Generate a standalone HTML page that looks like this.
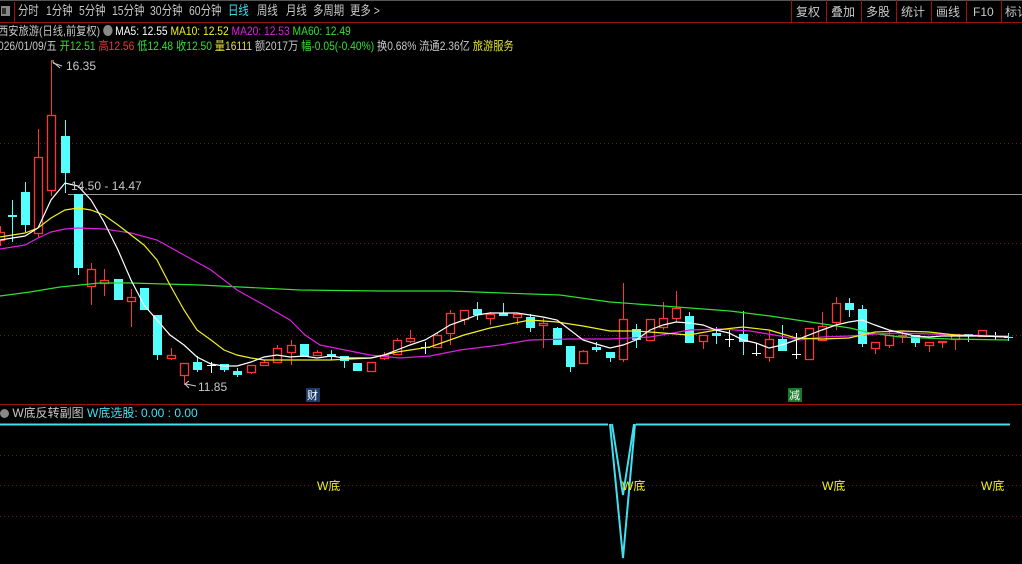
<!DOCTYPE html>
<html><head><meta charset="utf-8">
<style>
body{margin:0;background:#000;width:1022px;height:564px;overflow:hidden;font-family:"Liberation Sans","Noto Sans CJK SC",sans-serif;}
.t{position:absolute;font-size:12px;white-space:nowrap;line-height:14px}
.sx{transform:scaleX(0.855);transform-origin:0 0}
.tb{font-size:13px;transform:scaleX(0.8);transform-origin:0 0;top:4px!important}
</style></head><body>
<svg id="s" width="1022" height="564" style="position:absolute;left:0;top:0" xmlns="http://www.w3.org/2000/svg">
<rect width="1022" height="564" fill="#000"/>
<rect x="0" y="0" width="1022" height="1" fill="#555"/>
<line x1="0" y1="22.5" x2="1022" y2="22.5" stroke="#a01010"/>
<line x1="14.5" y1="2" x2="14.5" y2="22" stroke="#a01010"/>
<rect x="1" y="6" width="9" height="10" fill="#888"/><rect x="2" y="8" width="4" height="6" fill="#333"/>
<g stroke="#a01010">
<line x1="791.5" y1="0" x2="791.5" y2="22"/><line x1="826.5" y1="0" x2="826.5" y2="22"/><line x1="861.5" y1="0" x2="861.5" y2="22"/><line x1="896.5" y1="0" x2="896.5" y2="22"/><line x1="931.5" y1="0" x2="931.5" y2="22"/><line x1="966.5" y1="0" x2="966.5" y2="22"/><line x1="1001.5" y1="0" x2="1001.5" y2="22"/>
</g>
<g stroke="#6a1a1a" stroke-dasharray="1 3">
<line x1="0" y1="143.5" x2="1022" y2="143.5"/><line x1="0" y1="243.5" x2="1022" y2="243.5"/><line x1="0" y1="335.5" x2="1022" y2="335.5"/>
<line x1="0" y1="455.5" x2="1022" y2="455.5"/><line x1="0" y1="485.5" x2="1022" y2="485.5"/><line x1="0" y1="516.5" x2="1022" y2="516.5"/>
</g>
<line x1="68" y1="194.5" x2="1022" y2="194.5" stroke="#999"/>
<line x1="0" y1="404.5" x2="1022" y2="404.5" stroke="#a01010"/>
<g id="c"></g>
<g fill="none" stroke-width="1.2">
<polyline stroke="#30e030" points="0,296 30,292 60,287 80,285 100,283 130,283 200,285 300,290 380,291 450,291 530,294 560,295 610,302 650,305 690,308 730,311 770,316 810,322 850,328 870,333 900,337 950,339 1008,340"/>
<polyline stroke="#e020e0" points="0,249 25,245 38,238 51,232 65,229 78,228 104,229 131,233 157,240 184,255 211,270 237,290 264,305 290,320 305,335 320,345 345,350 370,355 400,358 430,356 460,350 500,345 530,340 570,339 610,339 650,337 690,330 720,329 750,331 780,336 800,340 822,337 849,336 875,334 900,333 930,334 960,335 1008,336"/>
<polyline stroke="#f0f020" points="0,237 25,233 38,228 51,218 65,210 78,208 91,210 104,215 118,225 131,235 144,245 157,260 170,285 184,310 197,330 211,340 224,350 237,355 251,358 264,360 290,360 330,360 371,358 397,352 430,347 464,335 490,328 530,320 557,322 583,326 610,331 636,331 663,333 689,335 716,330 743,327 769,330 796,338 822,339 849,338 875,332 902,331 929,332 955,335 982,336 1008,337"/>
<polyline stroke="#fff" points="0,240 25,236 38,228 51,200 65,183 78,186 91,200 104,222 118,250 131,280 144,305 157,320 170,335 184,345 197,357 211,364 224,366 237,366 251,362 264,357 277,355 290,357 304,356 317,358 331,356 344,358 357,358 371,358 384,355 397,350 410,345 425,340 437,333 450,325 464,320 477,315 490,313 503,313 517,313 530,315 543,317 557,320 570,330 583,340 596,344 610,348 623,345 636,340 650,330 663,325 676,322 689,323 703,325 716,330 729,333 743,340 756,343 769,348 782,345 796,340 809,335 822,330 836,325 849,322 862,320 875,325 889,330 902,333 915,336 929,337 942,336 955,336 968,336 982,336 1008,337"/>
</g>
<g stroke="#ccc" fill="none"><polyline points="60,68 53,62 53,60"/><line x1="53" y1="63" x2="62" y2="66"/><line x1="186" y1="384" x2="196" y2="386"/><polyline points="189,381 185,384 189,388"/></g>
<line x1="0" y1="424.5" x2="608" y2="424.5" stroke="#40e0f0" stroke-width="2"/>
<line x1="636" y1="424.5" x2="1010" y2="424.5" stroke="#40e0f0" stroke-width="2"/>
<g fill="none" stroke="#40e0f0" stroke-width="2">
<polyline points="610,424 623,558 635,424"/>
<polyline points="612,424 623,495 634,424"/>
</g>
<rect x="306" y="388" width="14" height="14" fill="#1c3a6a"/>
<rect x="788" y="388" width="14" height="14" fill="#1a7a2a"/>
</svg>
<script>
var d=[[0,1,232,240,226,246],[12,0,215,217,200,242],[25,0,192,225,182,232],[38,1,157,233,129,238],[51,1,115,190,60,196],[65,0,136,173,120,193],[78,0,194,268,194,275],[91,1,269,286,263,305],[104,1,280,283,269,296],[118,0,279,300,279,300],[131,1,297,301,289,327],[144,0,288,310,288,310],[157,0,315,355,315,360],[171,1,355,358,348,360],[184,1,363,375,363,385],[197,0,362,370,356,372],[211,2,365,365,362,373],[224,0,364,370,364,372],[237,0,371,375,368,377],[251,1,365,372,365,374],[264,1,362,365,360,366],[277,1,348,362,345,362],[291,1,345,352,340,365],[304,0,344,357,344,357],[317,1,352,355,350,355],[331,0,354,357,350,360],[344,0,356,361,356,368],[357,0,363,371,363,371],[371,1,362,371,362,371],[384,1,355,358,352,360],[397,1,340,354,338,354],[410,1,338,341,330,343],[425,2,347,347,342,354],[437,1,335,347,333,347],[450,1,313,333,310,345],[464,1,310,319,310,325],[477,0,309,315,302,320],[490,1,314,318,312,325],[503,0,313,316,303,316],[517,1,314,317,314,325],[530,0,317,328,314,332],[543,1,323,325,318,348],[557,0,328,345,327,345],[570,0,346,367,346,372],[583,1,351,363,350,364],[596,0,347,350,342,352],[610,0,352,358,352,362],[623,1,319,359,283,362],[636,0,329,340,324,348],[650,1,319,340,319,340],[663,1,318,327,302,330],[676,1,308,318,291,322],[689,0,316,343,312,343],[703,1,335,341,335,349],[716,0,333,336,327,344],[729,2,339,339,328,347],[743,0,334,342,311,355],[756,2,353,353,343,356],[769,1,339,357,331,362],[782,0,339,351,325,351],[796,2,354,354,333,359],[809,1,328,359,328,359],[822,1,326,340,312,340],[836,1,303,322,297,330],[849,0,303,310,298,317],[862,0,309,344,305,347],[875,1,342,348,342,354],[889,1,335,345,330,348],[902,1,335,336,332,343],[915,0,335,343,335,347],[929,1,342,345,342,352],[942,1,341,342,341,348],[955,1,334,339,334,350],[968,0,334,336,334,342],[982,1,330,336,330,336],[995,2,336,336,332,340],[1008,3,337,337,333,341]];
var g=document.getElementById('c'),h='';
d.forEach(function(c){var x=c[0],t=c[1],col=t==1?'#ff3434':(t==2?'#ffffff':'#54ffff');
h+='<line x1="'+(x+.5)+'" y1="'+c[4]+'" x2="'+(x+.5)+'" y2="'+c[5]+'" stroke="'+col+'"/>';
var hh=Math.max(c[3]-c[2],1);
if(t==1)h+='<rect x="'+(x-3.5)+'" y="'+(c[2]+.5)+'" width="8" height="'+hh+'" fill="#000" stroke="'+col+'" stroke-width="1.3"/>';
else if(t==0)h+='<rect x="'+(x-4)+'" y="'+c[2]+'" width="9" height="'+hh+'" fill="'+col+'"/>';
else h+='<line x1="'+(x-4)+'" y1="'+(c[2]+.5)+'" x2="'+(x+5)+'" y2="'+(c[2]+.5)+'" stroke="'+col+'"/>';});
g.innerHTML=h;
</script>
<div class="t tb" style="left:18px;color:#c8c8c8">分时</div>
<div class="t tb" style="left:46px;color:#c8c8c8">1分钟</div>
<div class="t tb" style="left:79px;color:#c8c8c8">5分钟</div>
<div class="t tb" style="left:112px;color:#c8c8c8">15分钟</div>
<div class="t tb" style="left:150px;color:#c8c8c8">30分钟</div>
<div class="t tb" style="left:189px;color:#c8c8c8">60分钟</div>
<div class="t tb" style="left:228px;color:#40e0f0">日线</div>
<div class="t tb" style="left:257px;color:#c8c8c8">周线</div>
<div class="t tb" style="left:286px;color:#c8c8c8">月线</div>
<div class="t tb" style="left:313px;color:#c8c8c8">多周期</div>
<div class="t tb" style="left:350px;color:#c8c8c8">更多 &gt;</div>
<div class="t" style="left:796px;top:5px;color:#c8c8c8">复权</div>
<div class="t" style="left:831px;top:5px;color:#c8c8c8">叠加</div>
<div class="t" style="left:866px;top:5px;color:#c8c8c8">多股</div>
<div class="t" style="left:901px;top:5px;color:#c8c8c8">统计</div>
<div class="t" style="left:936px;top:5px;color:#c8c8c8">画线</div>
<div class="t" style="left:973px;top:5px;color:#c8c8c8">F10</div>
<div class="t" style="left:1005px;top:5px;color:#c8c8c8">标记</div>
<div class="t sx" style="left:-2px;top:24px;color:#c8c8c8">西安旅游(日线,前复权) <span style="display:inline-block;width:11px;height:11px;border-radius:6px;background:#888;vertical-align:-1px"></span> <span style="color:#fff">MA5: 12.55</span> <span style="color:#f0f020">MA10: 12.52</span> <span style="color:#e020e0">MA20: 12.53</span> <span style="color:#30e030">MA60: 12.49</span></div>
<div class="t sx" style="left:-2px;top:39px;color:#c8c8c8">026/01/09/五 <span style="color:#30e030">开12.51</span> <span style="color:#f03838">高12.56</span> <span style="color:#30e030">低12.48</span> <span style="color:#30e030">收12.50</span> <span style="color:#e0e040">量16111</span> 额2017万 <span style="color:#30e030">幅-0.05(-0.40%)</span> 换0.68% 流通2.36亿 <span style="color:#e0e040">旅游服务</span></div>
<div class="t" style="left:66px;top:59px;color:#c8c8c8">16.35</div>
<div class="t" style="left:71px;top:179px;color:#c8c8c8">14.50 - 14.47</div>
<div class="t" style="left:198px;top:380px;color:#c8c8c8">11.85</div>
<div class="t" style="left:307px;top:389px;color:#fff;font-size:11px">财</div>
<div class="t" style="left:789px;top:389px;color:#fff;font-size:11px">减</div>
<div class="t" style="left:0px;top:406px;color:#c8c8c8"><span style="display:inline-block;width:9px;height:9px;border-radius:5px;background:#888;vertical-align:-1px"></span> W底反转副图 <span style="color:#40e0f0">W底选股: 0.00 : 0.00</span></div>
<div class="t" style="left:317px;top:479px;color:#f0f020">W底</div>
<div class="t" style="left:622px;top:479px;color:#f0f020">W底</div>
<div class="t" style="left:822px;top:479px;color:#f0f020">W底</div>
<div class="t" style="left:981px;top:479px;color:#f0f020">W底</div>
</body></html>
